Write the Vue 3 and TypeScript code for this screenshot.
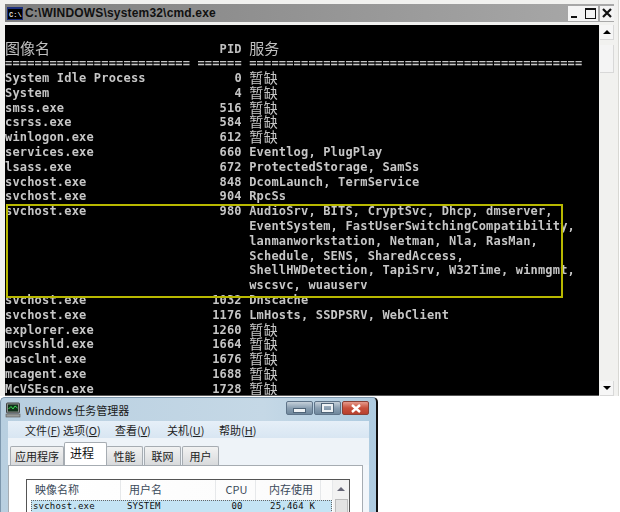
<script setup lang="ts">
interface Row { name: string; pid: string; svc: string }
const na = '暂缺'
const rows: Row[] = [
  { name: 'System Idle Process', pid: '0', svc: na },
  { name: 'System', pid: '4', svc: na },
  { name: 'smss.exe', pid: '516', svc: na },
  { name: 'csrss.exe', pid: '584', svc: na },
  { name: 'winlogon.exe', pid: '612', svc: na },
  { name: 'services.exe', pid: '660', svc: 'Eventlog, PlugPlay' },
  { name: 'lsass.exe', pid: '672', svc: 'ProtectedStorage, SamSs' },
  { name: 'svchost.exe', pid: '848', svc: 'DcomLaunch, TermService' },
  { name: 'svchost.exe', pid: '904', svc: 'RpcSs' },
  { name: 'svchost.exe', pid: '980', svc: 'AudioSrv, BITS, CryptSvc, Dhcp, dmserver,' },
  { name: '', pid: '', svc: 'EventSystem, FastUserSwitchingCompatibility,' },
  { name: '', pid: '', svc: 'lanmanworkstation, Netman, Nla, RasMan,' },
  { name: '', pid: '', svc: 'Schedule, SENS, SharedAccess,' },
  { name: '', pid: '', svc: 'ShellHWDetection, TapiSrv, W32Time, winmgmt,' },
  { name: '', pid: '', svc: 'wscsvc, wuauserv' },
  { name: 'svchost.exe', pid: '1032', svc: 'Dnscache' },
  { name: 'svchost.exe', pid: '1176', svc: 'LmHosts, SSDPSRV, WebClient' },
  { name: 'explorer.exe', pid: '1260', svc: na },
  { name: 'mcvsshld.exe', pid: '1664', svc: na },
  { name: 'oasclnt.exe', pid: '1676', svc: na },
  { name: 'mcagent.exe', pid: '1688', svc: na },
  { name: 'McVSEscn.exe', pid: '1728', svc: na },
]
const isCjk = (s: string) => s === na
const tabs = ['应用程序', '进程', '性能', '联网', '用户']
const menus = [
  { t: '文件(', k: 'F', e: ')' },
  { t: '选项(', k: 'O', e: ')' },
  { t: '查看(', k: 'V', e: ')' },
  { t: '关机(', k: 'U', e: ')' },
  { t: '帮助(', k: 'H', e: ')' },
]
</script>

<template>
  <div class="page">
    <section class="cmd">
      <header class="cmd-title">
        <svg class="cmd-icon" width="16" height="13" viewBox="0 0 16 13">
          <rect width="16" height="13" fill="#1c2f7c" />
          <rect x="1" y="2" width="14" height="10" fill="#000" />
          <text x="2" y="9.5" font-size="7" font-family="Liberation Mono" font-weight="700" fill="#ddd">C:\</text>
        </svg>
        <span class="cmd-name">C:\WINDOWS\system32\cmd.exe</span>
        <div class="cmd-btns">
          <div class="cmd-btn-group">
            <span class="cbtn"><i class="g-min"></i></span>
            <span class="cbtn"><i class="g-max"></i></span>
          </div>
          <span class="cbtn close">
            <svg width="10" height="10" viewBox="0 0 10 10"><path d="M1 1 L9 9 M9 1 L1 9" stroke="#111" stroke-width="2.2" /></svg>
          </span>
        </div>
      </header>
      <div class="cmd-body">
        <div class="console">
          <div class="row head">
            <span class="cjk-lg">图像名</span><span class="pid">PID</span><span class="cjk-lg">服务</span>
          </div>
          <div class="row">
            <span>=========================</span><span class="pid">======</span><span>=============================================</span>
          </div>
          <div v-for="(r, i) in rows" :key="i" class="row">
            <span>{{ r.name }}</span>
            <span class="pid">{{ r.pid }}</span>
            <span :class="{ cjk: isCjk(r.svc) }">{{ r.svc }}</span>
          </div>
          <div class="mark"></div>
        </div>
        <aside class="scroll">
          <span class="sbtn"><i class="up"></i></span>
          <span class="thumb"></span>
          <span class="track"></span>
          <span class="sbtn"><i class="down"></i></span>
        </aside>
      </div>
    </section>

    <section class="tm">
      <header class="tm-title">
        <svg class="tm-icon" width="16" height="16" viewBox="0 0 16 16">
          <rect x="1.5" y="1" width="13" height="10" rx="1" fill="#8a8f8c" stroke="#444" />
          <rect x="3" y="2.5" width="10" height="7" fill="#10301a" />
          <path d="M3.5 7 L6 4.5 L8 7 L10 4 L12.5 6" stroke="#3fdc55" fill="none" />
          <rect x="1" y="12" width="14" height="3" fill="#9a9d9b" stroke="#555" stroke-width=".6" />
        </svg>
        <span class="tm-name">Windows 任务管理器</span>
        <div class="tm-btns">
          <span class="wbtn"><i class="w-min"></i></span>
          <span class="wbtn"><i class="w-max"></i></span>
          <span class="wbtn red">
            <svg width="12" height="9" viewBox="0 0 12 9"><path d="M2 1 L10 8 M10 1 L2 8" stroke="#fff" stroke-width="2.4" /></svg>
          </span>
        </div>
      </header>
      <div class="tm-inner">
        <nav class="menu">
          <span v-for="m in menus" :key="m.k" class="menu-item">{{ m.t }}<u>{{ m.k }}</u>{{ m.e }}</span>
        </nav>
        <div class="tabs">
          <span v-for="(t, i) in tabs" :key="t" class="tab" :class="{ active: i === 1 }">{{ t }}</span>
        </div>
        <div class="panel">
          <div class="list">
            <div class="list-main">
              <div class="thead">
                <span class="c1">映像名称</span>
                <span class="c2">用户名</span>
                <span class="c3">CPU</span>
                <span class="c4">内存使用</span>
                <span class="c5"></span>
              </div>
              <div class="tr">
                <span class="c1">svchost.exe</span>
                <span class="c2">SYSTEM</span>
                <span class="c3">00</span>
                <span class="c4">25,464 K</span>
              </div>
            </div>
            <div class="list-scroll">
              <i class="lup"></i>
              <span class="lthumb"></span>
            </div>
          </div>
        </div>
      </div>
    </section>
  </div>
</template>

<style scoped>
.page {
  width: 620px;
  height: 512px;
  overflow: hidden;
  background: #fff;
  display: flex;
  flex-direction: column;
}
.cmd {
  height: 396px;
  flex: none;
  box-sizing: border-box;
  margin-right: 1px;
  padding: 4px 4px 0 0;
  background: #f1f1ef;
  border-right: 1px solid #d8d8d4;
  display: flex;
  flex-direction: column;
}
.cmd-title {
  height: 18px;
  flex: none;
  margin-left: 5px;
  padding-left: 2px;
  display: flex;
  align-items: center;
  background: linear-gradient(90deg, #7f7f7f, #a9a9a9);
}
.cmd-icon { flex: none; margin-right: 2px; }
.cmd-name {
  font: 700 12px "Liberation Sans", sans-serif;
  letter-spacing: 0.18px;
  color: #111;
}
.cmd-btns { margin-left: auto; display: flex; gap: 2px; }
.cmd-btn-group { display: flex; }
.cbtn {
  width: 15px;
  height: 15px;
  background: #f4f4f4;
  display: flex;
  align-items: center;
  justify-content: center;
  position: relative;
}
.cbtn.close { width: 14px; }
.g-min { width: 6px; height: 2px; background: #111; margin-top: 7px; margin-right: 4px; }
.g-max { width: 9px; height: 8px; border: 1px solid #111; border-top-width: 2px; }
.cmd-body {
  flex: 1;
  min-height: 0;
  margin-top: 3px;
  display: flex;
}
.console {
  margin-left: 5px;
  width: 594px;
  flex: none;
  box-sizing: border-box;
  padding: 16.5px 0 0 0;
  background: #000;
  color: #c6c6c6;
  overflow: hidden;
  position: relative;
  border-bottom: 1px solid #555;
  font: 700 12px/14.8px "DejaVu Sans Mono", monospace;
  letter-spacing: 0.18px;
  filter: blur(0.3px);
}
.row {
  display: grid;
  grid-template-columns: 185px 44.4px 1fr;
  column-gap: 7.4px;
  height: 14.8px;
  white-space: pre;
}
.pid { text-align: right; }
.cjk {
  font: 400 14px/12.8px "Noto Sans CJK SC", sans-serif;
  letter-spacing: 0.7px;
}
.cjk-lg {
  font: 400 15px/11px "Noto Sans CJK SC", sans-serif;
  letter-spacing: 0;
}
.head { color: #c0c0c0; }
.mark {
  position: absolute;
  left: 1px;
  top: 179px;
  width: 553px;
  height: 90px;
  border: 2px solid #b8b800;
}
.scroll {
  width: 14px;
  margin-left: 1px;
  flex: none;
  display: flex;
  flex-direction: column;
  background: #f1f1ef;
}
.sbtn {
  height: 15px;
  flex: none;
  background: #f6f6f6;
  border-right: 1px solid #d8d8d8;
  border-bottom: 1px solid #d8d8d8;
  box-sizing: border-box;
  display: flex;
  align-items: center;
  justify-content: center;
}
.up, .down { width: 0; height: 0; border-left: 4px solid transparent; border-right: 4px solid transparent; }
.up { border-bottom: 4px solid #000; }
.down { border-top: 4px solid #000; }
.thumb {
  height: 27px;
  margin-top: 5px;
  flex: none;
  background: #f4f4f4;
  border-right: 1px solid #d8d8d8;
  border-bottom: 1px solid #d8d8d8;
}
.track { flex: 1; }

.tm {
  height: 115px;
  width: 378px;
  flex: none;
  margin-top: 1px;
  box-sizing: border-box;
  border-right: 2px solid #111;
  border-top: 1px solid #7d97ad;
  border-left: 1px solid #7d97ad;
  border-radius: 5px 5px 0 0;
  background: linear-gradient(90deg, #b8cfe0, #c5d8e6 70%, #aecbe0);
  display: flex;
  flex-direction: column;
}
.tm-title {
  height: 23px;
  flex: none;
  display: flex;
  align-items: center;
  padding-left: 4px;
  padding-right: 7px;
}
.tm-icon { flex: none; margin-right: 4px; }
.tm-name {
  font: 400 11px "Noto Sans CJK SC", "Liberation Sans", sans-serif;
  color: #1a1a1a;
  margin-top: 1px;
}
.tm-btns { margin-left: auto; display: flex; gap: 1px; margin-top: -3px; }
.wbtn {
  width: 27px;
  height: 14px;
  border: 1px solid #5f7489;
  border-radius: 2px;
  box-sizing: border-box;
  background: linear-gradient(#c5d0da, #8ba0b3 50%, #6f879c);
  display: flex;
  align-items: center;
  justify-content: center;
}
.wbtn.red { background: linear-gradient(#e59a8c, #c8503c 50%, #b8402e); border-color: #8a4035; }
.w-min { width: 11px; height: 3px; background: #eef2f5; border: 1px solid #4f6478; margin-top: 4px; }
.w-max { width: 7px; height: 4px; background: transparent; border: 2px solid #eef2f5; outline: 1px solid #4f6478; }
.tm-inner {
  flex: 1;
  min-height: 0;
  margin: 0 7px 0 7px;
  display: flex;
  flex-direction: column;
  background: #f2f6fa;
}
.menu {
  height: 17px;
  flex: none;
  display: flex;
  align-items: center;
  padding-left: 17px;
  background: linear-gradient(#e6eff8, #d8e6f2);
  font: 400 11px "Noto Sans CJK SC", sans-serif;
  color: #222;
}
.menu-item { width: 52px; flex: none; white-space: nowrap; }
.menu-item:first-child { width: 38px; }
.tabs {
  height: 27px;
  flex: none;
  padding: 3px 0 0 2px;
  box-sizing: border-box;
  display: flex;
  align-items: flex-end;
  background: #eef3f8;
  font: 400 11px "Noto Sans CJK SC", sans-serif;
  color: #222;
}
.tab {
  width: 37px;
  height: 19px;
  box-sizing: border-box;
  border: 1px solid #a6acb2;
  border-bottom: none;
  margin-right: 1px;
  background: linear-gradient(#f2f2f2, #d8dadc);
  text-align: center;
  line-height: 18px;
  border-radius: 2px 2px 0 0;
}
.tab:first-child { width: 54px; }
.tab.active {
  width: 43px;
  height: 23px;
  background: #fff;
  line-height: 20px;
  font-size: 12px;
  margin: 0 -1px 0 -1px;
  padding-right: 7px;
  position: relative;
  z-index: 1;
  color: #111;
}
.panel {
  flex: 1;
  min-height: 0;
  margin-right: 6px;
  background: #fff;
  border: 1px solid #a6acb2;
  border-bottom: none;
  padding: 13px 12px 0 17px;
}
.list {
  height: 60px;
  box-sizing: border-box;
  border: 1px solid #555;
  border-bottom: none;
  display: flex;
  background: #fff;
}
.list-main { flex: 1; min-width: 0; }
.thead {
  display: grid;
  grid-template-columns: 94px 95px 40px 65px 1fr;
  height: 20px;
  align-items: center;
  font: 400 11px "Noto Sans CJK SC", "Liberation Sans", sans-serif;
  color: #3b4a5a;
  background: linear-gradient(90deg, #fff, #fbfbfb);
}
.thead > span { height: 20px; line-height: 18px; box-sizing: border-box; border-right: 1px solid #e6e8ea; }
.thead .c1 { padding-left: 8px; }
.thead .c2 { padding-left: 8px; }
.thead .c3 { text-align: center; padding-left: 2px; }
.thead .c4 { padding-left: 13px; white-space: nowrap; }
.tr {
  display: grid;
  grid-template-columns: 96px 90px 40px 60px;
  height: 13px;
  margin-left: 4px;
  margin-right: 1px;
  background: #c4e4f4;
  outline: 1px dotted #666;
  outline-offset: -1px;
  font: 400 9px/13px "DejaVu Sans Mono", monospace;
  color: #111;
  letter-spacing: 0.2px;
}
.tr .c1 { padding-left: 2px; }
.tr .c3 { text-align: center; }
.tr .c4 { text-align: right; padding-right: 2px; white-space: nowrap; }
.list-scroll {
  width: 16px;
  flex: none;
  background: #f2f2f2;
  display: flex;
  flex-direction: column;
  align-items: center;
  padding-top: 7px;
  box-sizing: border-box;
}
.lup { width: 0; height: 0; border-left: 4px solid transparent; border-right: 4px solid transparent; border-bottom: 4px solid #667; }
.lthumb { width: 13px; flex: 1; margin-top: 8px; background: #e2e2e2; border: 1px solid #bbb; box-sizing: border-box; }
</style>
